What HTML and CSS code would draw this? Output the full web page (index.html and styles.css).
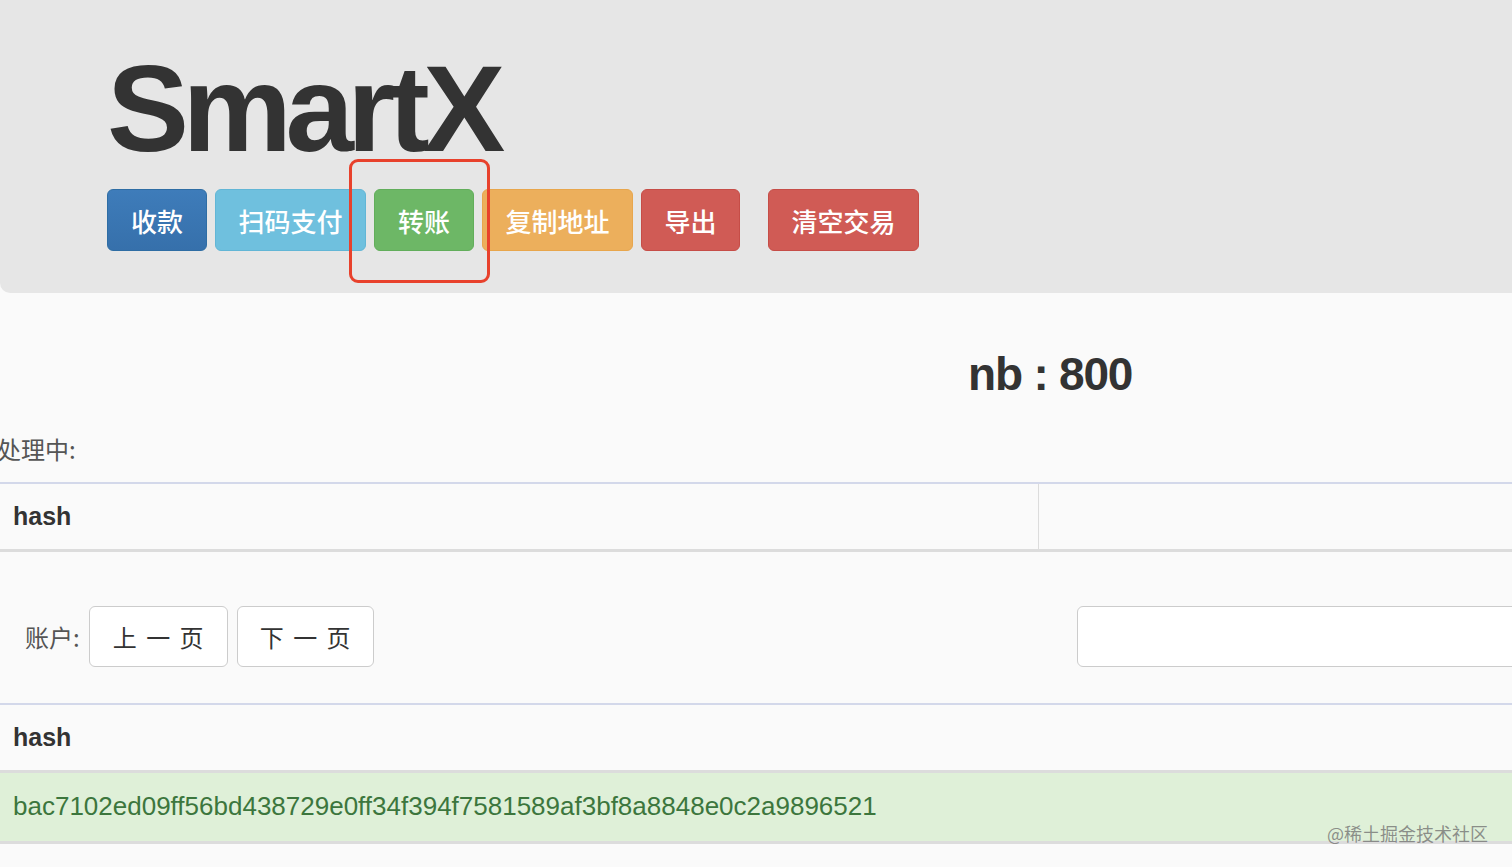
FILE: index.html
```html
<!DOCTYPE html>
<html lang="zh-CN">
<head>
    <meta charset="UTF-8">
    <meta name="viewport" content="width=device-width, initial-scale=1.0">
    <title>SmartX</title>
    <link rel="stylesheet" href="styles.css">
</head>
<body>
    <div class="jumbotron">
        <h1 class="brand">SmartX</h1>
        <div class="actions">
            <button class="btn btn-primary">收款</button>
            <button class="btn btn-info">扫码支付</button>
            <button class="btn btn-success">转账</button>
            <button class="btn btn-warning">复制地址</button>
            <button class="btn btn-danger">导出</button>
            <button class="btn btn-danger btn-far">清空交易</button>
        </div>
        <div class="highlight"></div>
    </div>

    <div class="main">
        <div class="balance">nb : 800</div>

        <div class="label">处理中:</div>
        <table class="table">
            <thead>
                <tr>
                    <th class="col-hash">hash</th>
                    <th></th>
                </tr>
            </thead>
        </table>

        <div class="toolbar">
            <span class="label-inline">账户:</span>
            <button class="btn-page">上 一 页</button>
            <button class="btn-page">下 一 页</button>
            <input class="search" type="text">
        </div>

        <table class="table">
            <thead>
                <tr>
                    <th>hash</th>
                </tr>
            </thead>
            <tbody>
                <tr class="success">
                    <td>bac7102ed09ff56bd438729e0ff34f394f7581589af3bf8a8848e0c2a9896521</td>
                </tr>
            </tbody>
        </table>
    </div>

    <div class="watermark">@稀土掘金技术社区</div>
</body>
</html>
```

FILE: styles.css
```css
/* styles.css */
body {
    margin: 0;
    padding: 0;
    overflow: hidden;
    background: #fafafa;
    color: #333;
    font-family: "Liberation Sans", "Noto Sans CJK SC", sans-serif;
    font-size: 24px;
}

.jumbotron {
    position: relative;
    height: 293px;
    box-sizing: border-box;
    padding: 47px 0 0 107px;
    background: #e6e6e6;
    border-bottom-left-radius: 10px;
}

.brand {
    margin: 0;
    font-size: 123px;
    line-height: 1;
    font-weight: bold;
    letter-spacing: -6.5px;
    color: #333;
}

.actions {
    display: flex;
    gap: 8px;
    margin-top: 19px;
}

.btn {
    box-sizing: border-box;
    height: 62px;
    padding: 0;
    white-space: nowrap;
    font-family: "Noto Sans CJK SC", sans-serif;
    font-size: 26px;
    font-weight: 500;
    color: #fff;
    border-radius: 6px;
    border: 1px solid transparent;
}
.btn-primary {
    background: linear-gradient(#3e7cba, #3670ab);
    border-color: #2e6da4;
    width: 100px;
}
.btn-info {
    background: #6fc0de;
    border-color: #62b6d6;
    width: 151px;
}
.btn-success {
    background: #6db766;
    border-color: #62ae5b;
    width: 100px;
}
.btn-warning {
    background: #ecaf5c;
    border-color: #e8a64c;
    width: 151px;
}
.btn-danger {
    background: #d05b55;
    border-color: #c64d47;
    width: 99px;
}
.btn-far {
    margin-left: 20px;
    width: 151px;
}

/* red frame drawn over the screenshot */
.highlight {
    position: absolute;
    left: 349px;
    top: 159px;
    width: 141px;
    height: 124px;
    box-sizing: border-box;
    border: 3px solid #e8412c;
    border-radius: 9px;
}

.main {
    margin-left: -3px;
    width: 1560px;
}

.balance {
    margin: 56px 0 0 971px;
    font-size: 46px;
    line-height: 1.1;
    font-weight: bold;
    letter-spacing: -1.2px;
}

.label {
    margin-top: 32px;
    line-height: 34px;
    color: #555;
    font-family: "Noto Sans CJK SC", sans-serif;
}

.table {
    width: 100%;
    border-collapse: collapse;
    border-top: 2px solid #d3d8ea;
}
.label + .table {
    margin-top: 16px;
}
.table th {
    height: 65px;
    padding: 0 16px;
    text-align: left;
    font-size: 25px;
    font-weight: bold;
    color: #333;
    border-bottom: 3px solid #dcdcdc;
}
.table th.col-hash {
    width: 1009px;
    border-right: 1px solid #dcdcdc;
}
.table td {
    height: 68px;
    padding: 0 16px;
    font-size: 26px;
    border-bottom: 3px solid #dcdcdc;
}
.table tr.success td {
    background: #dff0d8;
    color: #3c763d;
}

.toolbar {
    display: flex;
    align-items: center;
    gap: 9px;
    padding: 54px 0 36px 28px;
}
.label-inline {
    color: #555;
    font-family: "Noto Sans CJK SC", sans-serif;
}
.btn-page {
    box-sizing: border-box;
    width: 139px;
    height: 61px;
    padding: 0;
    background: #fff;
    border: 1px solid #ccc;
    border-radius: 6px;
    color: #333;
    font-family: "Noto Sans CJK SC", sans-serif;
    font-size: 24px;
    word-spacing: 4px;
}
.btn-page + .btn-page {
    width: 137px;
}
.search {
    margin-left: auto;
    width: 480px;
    height: 61px;
    box-sizing: border-box;
    background: #fff;
    border: 1px solid #ccc;
    border-radius: 6px;
}

.watermark {
    position: absolute;
    right: 24px;
    top: 820px;
    font-family: "Noto Sans CJK SC", sans-serif;
    font-size: 18px;
    color: rgba(110, 110, 110, 0.75);
}
```
